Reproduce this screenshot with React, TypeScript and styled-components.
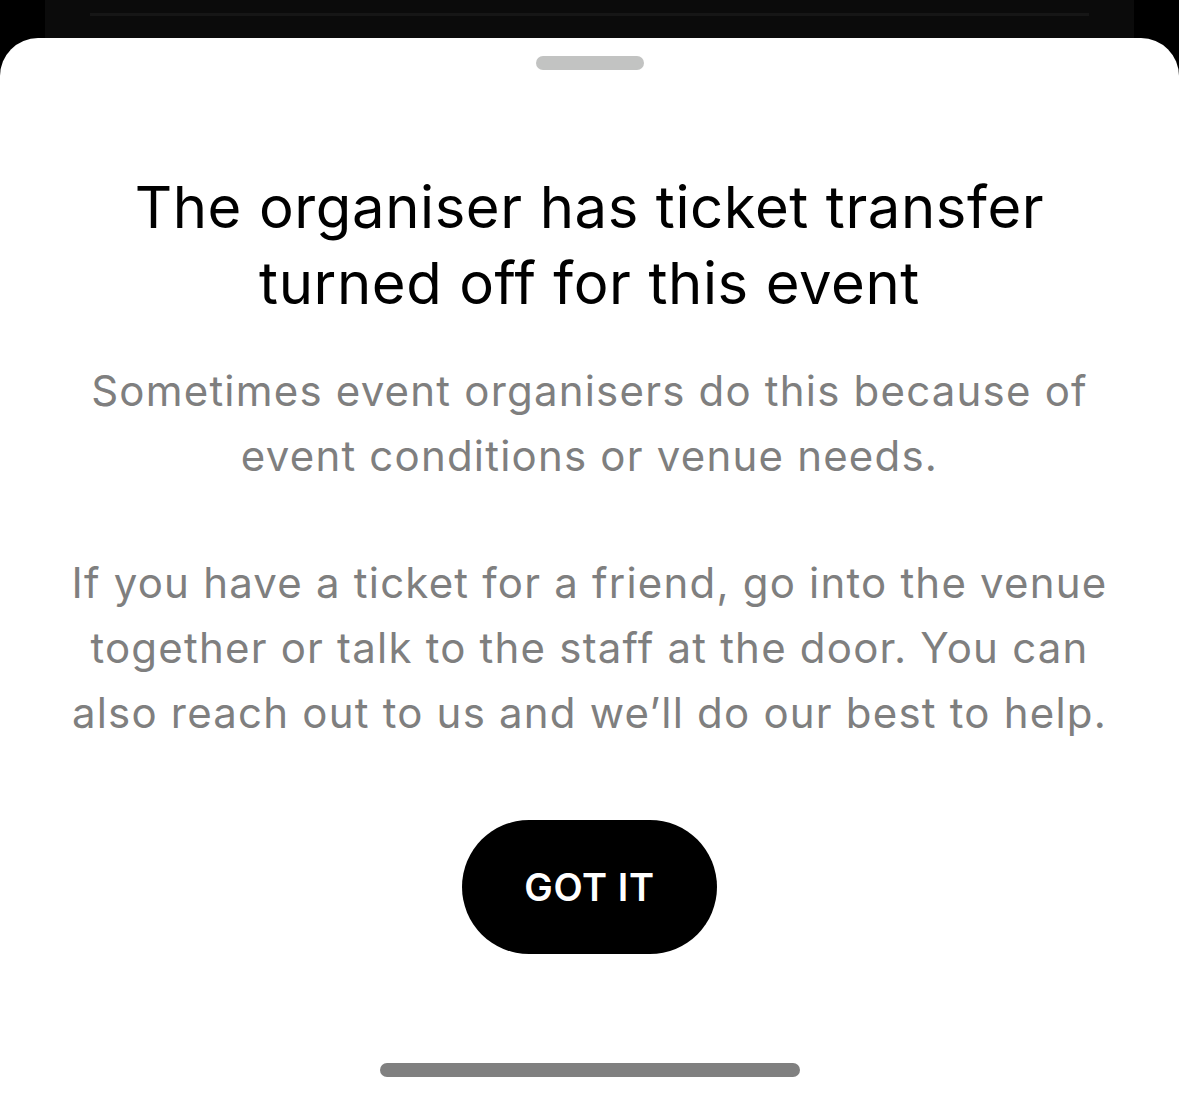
import React from "react";
import styled, { createGlobalStyle } from "styled-components";

const GlobalStyle = createGlobalStyle`
  html, body {
    margin: 0;
    padding: 0;
    background: #000;
  }
  body {
    font-family: Inter, "Noto Sans", "Liberation Sans", sans-serif;
    -webkit-font-smoothing: antialiased;
  }
`;

const Screen = styled.div`
  width: 1179px;
  height: 1102px;
  background: #000;
  display: flex;
  flex-direction: column;
  overflow: hidden;
`;

const BehindCard = styled.div`
  height: 38px;
  margin: 0 45px;
  background: #0b0b0b;
  display: flex;
  flex-direction: column;
  padding: 13px 45px 0;
  box-sizing: border-box;
`;

const BehindLine = styled.div`
  height: 3px;
  background: #161616;
`;

const Sheet = styled.div`
  flex: 1;
  background: #fff;
  border-radius: 38px 38px 0 0;
  display: flex;
  flex-direction: column;
  align-items: center;
  padding-top: 18px;
`;

const Grabber = styled.div`
  width: 108px;
  height: 14px;
  border-radius: 7px;
  background: #c2c3c2;
`;

const Title = styled.h1`
  margin: 99px 0 0;
  font-size: 58px;
  line-height: 76px;
  font-weight: 400;
  letter-spacing: 0.6px;
  color: #000;
  text-align: center;
`;

const Body = styled.p`
  margin: 0;
  font-size: 42px;
  line-height: 65px;
  font-weight: 400;
  letter-spacing: 1.2px;
  color: #7f7f7f;
  text-align: center;
  white-space: nowrap;
`;

const BodyBlock = styled.div`
  margin-top: 37px;
  display: flex;
  flex-direction: column;
  align-items: center;
  gap: 62px;
`;

const Button = styled.button`
  margin-top: 75px;
  width: 255px;
  height: 134px;
  flex-shrink: 0;
  border: none;
  border-radius: 67px;
  background: #000;
  color: #fff;
  font-family: inherit;
  font-size: 38px;
  font-weight: 600;
  letter-spacing: 0.6px;
`;

const HomeIndicator = styled.div`
  margin-top: auto;
  margin-bottom: 25px;
  width: 420px;
  height: 14px;
  border-radius: 7px;
  background: #808080;
`;

export default function App() {
  return (
    <>
      <GlobalStyle />
      <Screen>
        <BehindCard>
          <BehindLine />
        </BehindCard>
        <Sheet>
          <Grabber />
          <Title>
            The organiser has ticket transfer
            <br />
            turned off for this event
          </Title>
          <BodyBlock>
            <Body>
              Sometimes event organisers do this because of
              <br />
              event conditions or venue needs.
            </Body>
            <Body>
              If you have a ticket for a friend, go into the venue
              <br />
              together or talk to the staff at the door. You can
              <br />
              also reach out to us and we’ll do our best to help.
            </Body>
          </BodyBlock>
          <Button>GOT IT</Button>
          <HomeIndicator />
        </Sheet>
      </Screen>
    </>
  );
}
